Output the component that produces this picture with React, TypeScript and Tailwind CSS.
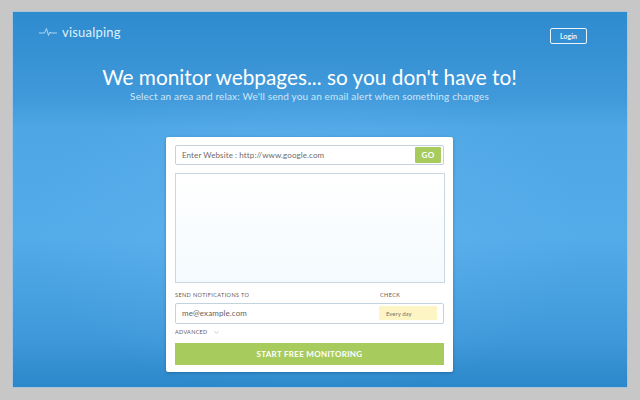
import { ChevronDown } from 'lucide-react'

export default function App() {
  return (
    <div className="w-[640px] h-[400px] bg-[#c8c7c8] pt-[11px] pr-[12px] pb-[12px] pl-[12px] font-['Lato','Open_Sans',sans-serif]">
      <div className="w-[616px] h-[377px] border border-[#a9c4da] bg-[radial-gradient(ellipse_45%_45%_at_48%_58%,rgba(110,190,245,0.4),rgba(110,190,245,0)),linear-gradient(to_bottom,#2e8bce_0%,#4099da_23%,#4ea6e4_31%,#53abe8_60%,#3f98da_87%,#2c88ca_100%)] flex flex-col">
        {/* header */}
        <div className="w-full flex items-start justify-between pt-[13px] pl-[26px] pr-[40px] h-[53px]">
          <div className="flex items-center gap-[5px] text-[#dff1fc]">
            <svg width="18" height="10" viewBox="0 0 18 10" fill="none" stroke="#cfe8f9" strokeWidth="0.8">
              <path d="M0 6H5.5L7.5 1.5L9.5 8.5L11 5L12 6H18" />
            </svg>
            <span className="text-[13px] leading-[14px] tracking-[0.2px]">visualping</span>
          </div>
          <button className="mt-[3px] w-[37px] h-[16px] border border-[#e8f4fc] rounded-[2px] text-[7px] font-bold leading-none text-[#e8f4fc]">
            Login
          </button>
        </div>

        <div className="flex flex-col items-center pr-[21px]">
          {/* headline */}
          <h1 className="mt-[-1px] text-[20.8px] leading-[26px] text-white">
            We monitor webpages... so you don't have to!
          </h1>
          <p className="mt-[-1px] text-[10px] leading-[14px] text-[#cfe7f8] tracking-[0.16px]">
            Select an area and relax: We'll send you an email alert when something changes
          </p>

          {/* card */}
          <div className="mt-[34px] w-[287px] h-[235px] bg-white rounded-[2px] shadow-[0_1px_3px_rgba(20,80,130,0.5)] pt-[8px] px-[9px] flex flex-col">
            <div className="h-[20px] border border-[#c3d2df] rounded-[2px] flex items-center justify-between pl-[6px] pr-[2px]">
              <span className="text-[8px] text-[#6f6a6a] tracking-[0.1px]">Enter Website : http://www.google.com</span>
              <span className="w-[26px] h-[16px] bg-[#a8cb5d] rounded-[1px] text-white text-[8px] font-bold flex items-center justify-center tracking-[0.3px]">GO</span>
            </div>

            <div className="mt-[8px] w-[270px] h-[110px] border border-[#c9d7e3] bg-gradient-to-b from-white to-[#f4fafe]" />

            <div className="mt-[9px] flex text-[5.5px] leading-[7px] text-[#5f5959] tracking-[0.4px]">
              <span className="w-[205px]">SEND NOTIFICATIONS TO</span>
              <span>CHECK</span>
            </div>

            <div className="mt-[4px] h-[21px] border border-[#c3d2df] rounded-[2px] flex items-center justify-between pl-[6px] pr-[6px] pb-[1px]">
              <span className="text-[8px] text-[#666161] tracking-[0.1px]">me@example.com</span>
              <span className="w-[58px] h-[14px] bg-[#fdf5c4] text-[6px] text-[#7d7468] flex items-center pl-[7px]">Every day</span>
            </div>

            <div className="mt-[5px] flex items-center gap-[5px] text-[5.5px] leading-[7px] text-[#5f5959] tracking-[0.3px]">
              <span>ADVANCED</span>
              <ChevronDown size={7} strokeWidth={1.5} className="text-[#a87a5c]" />
            </div>

            <button className="mt-[7px] h-[22px] bg-[#a8cb5d] text-white text-[8px] font-bold tracking-[0.3px]">
              START FREE MONITORING
            </button>
          </div>
        </div>
      </div>
    </div>
  )
}
